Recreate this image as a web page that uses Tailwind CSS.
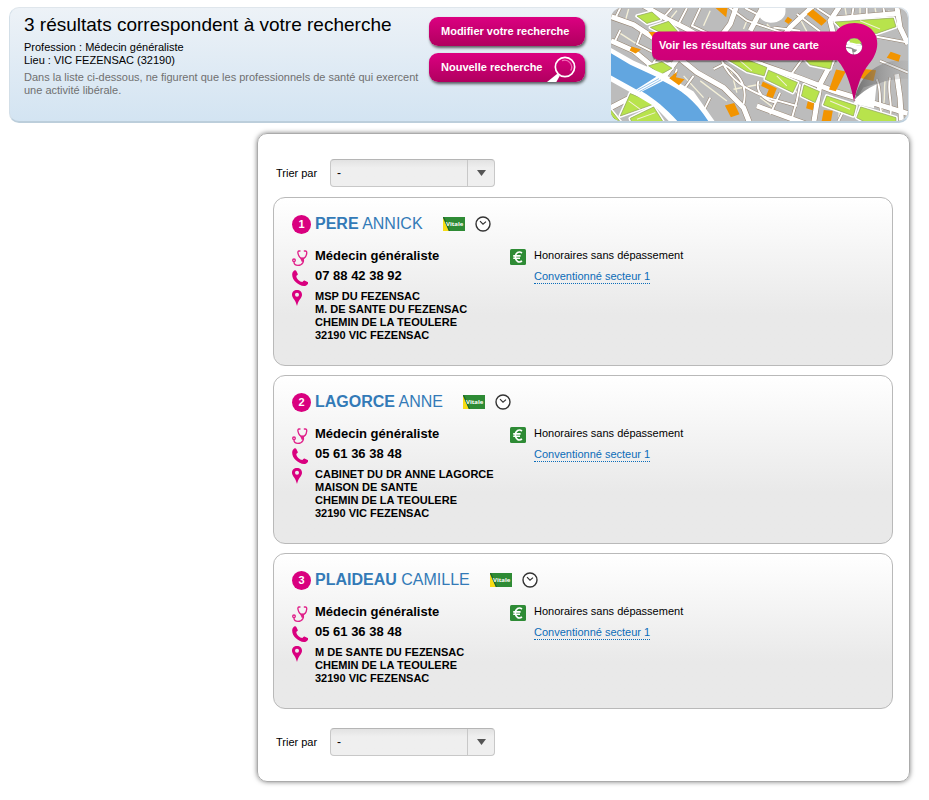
<!DOCTYPE html>
<html lang="fr">
<head>
<meta charset="utf-8">
<meta name="viewport" content="width=device-width, initial-scale=1">
<title>Résultats de recherche</title>
<script src="https://cdn.jsdelivr.net/npm/@tailwindcss/browser@4"></script>
</head>
<body class="bg-white font-['Liberation_Sans',Arial,sans-serif] text-[11px] text-black">

<svg class="hidden" aria-hidden="true">
  <symbol id="stethoscope" viewBox="0 0 48 48">
    <g fill="none" stroke="#e0218a" stroke-width="4" stroke-linecap="round">
      <path d="M24 3h-3c-3 0-4 3-3 7 2 9 6 15 13 15s12-6 13-15c1-4-1-7-4-7h-3"/>
      <path d="M31 25c8 8 0 21-13 21-7 0-12-4-12-10"/>
      <circle cx="6" cy="31" r="4"/>
    </g>
    <path d="M24 23h14l-5 12h-4z" fill="#e0218a"/>
  </symbol>
  <symbol id="phone" viewBox="0 0 48 48">
    <path d="M8 1c2-1 4 0 5 2l4 8c1 2 0 4-2 5l-2 2c0 4 2 8 6 12s8 6 12 6l3-3c1-2 3-2 5-1l8 4c2 1 2 3 1 5-3 5-7 7-12 7-9 0-18-5-25-12C4 29-1 19 1 10 2 6 5 2 8 1z" fill="#d9007f"/>
  </symbol>
  <symbol id="pin" viewBox="0 0 30 48">
    <path fill-rule="evenodd" d="M15 0C6 0 0 6 0 14c0 10 11 15 15 34 4-19 15-24 15-34C30 6 24 0 15 0zm0 8a6 6 0 1 1 0 12 6 6 0 0 1 0-12z" fill="#d9007f"/>
  </symbol>
  <symbol id="clock" viewBox="0 0 16 16">
    <circle cx="8" cy="8" r="7" fill="#fff" stroke="#333" stroke-width="1.4"/>
    <path d="M5 5.200l3 3 3-2.600" fill="none" stroke="#333" stroke-width="1.200"/>
  </symbol>
  <symbol id="vitale" viewBox="0 0 22 14">
    <path d="M0 0h22v14H0z" fill="#2e8b35"/>
    <path d="M0 1l6 13H0z" fill="#f7dc16"/>
    <path d="M0 0h1l6 14H5.800z" fill="#1f5f2a"/>
    <text x="3" y="9" font-size="6" font-weight="700" fill="#fff" font-family="Open Sans, sans-serif">Vitale</text>
  </symbol>
  <symbol id="euro" viewBox="0 0 16 16">
    <rect width="16" height="16" rx="1.500" fill="#2e8b35"/>
    <path d="M12 4C9 1.800 5.400 3.600 5.400 8s3.600 6.200 6.600 4M3.200 6.900h7.400M3.200 9.200h6.800" fill="none" stroke="#fff" stroke-width="1.600"/>
  </symbol>
</svg>

<header class="mt-[7px] mr-5 ml-[9px] flex rounded-[10px] border border-b-2 border-x-[#d3dfe8] border-t-[#dfe6ec] border-b-[#bccedb] bg-linear-to-b from-[#edf2f7] to-[#d3e4f2]">
  <div class="min-w-0 flex-1 pt-[3px] pl-[14px]">
    <h1 class="mb-[2px] text-[19px] leading-7">3 résultats correspondent à votre recherche</h1>
    <p class="leading-[13px]">Profession : Médecin généraliste</p>
    <p class="leading-[13px]">Lieu : VIC FEZENSAC (32190)</p>
    <p class="mt-1 leading-[13px] text-[#707070]">Dans la liste ci-dessous, ne figurent que les professionnels de santé qui exercent une activité libérale.</p>
  </div>
  <div class="flex w-[156px] shrink-0 flex-col gap-[7px] pt-[9px]">
    <button type="button" class="h-[29px] rounded-[9px] bg-linear-to-b from-[#dc0081] to-[#b0005f] pl-3 text-left text-[11px] font-bold text-white shadow-[1px_2px_3px_rgba(0,0,0,0.6)]">Modifier votre recherche</button>
    <button type="button" class="flex h-[29px] rounded-[9px] bg-linear-to-b from-[#dc0081] to-[#b0005f] pl-3 text-left text-[11px] leading-[28px] font-bold text-white shadow-[1px_2px_3px_rgba(0,0,0,0.6)]">Nouvelle recherche
      <svg class="mt-[3px] mr-[9px] ml-auto h-[26px] w-[29px]" viewBox="0 0 87 78" aria-hidden="true">
        <circle cx="54" cy="33" r="29" fill="none" stroke="#fff" stroke-width="5"/>
        <path d="M45 14a21 21 0 0 1 26 30" fill="none" stroke="#f06bb5" stroke-width="4"/>
        <path d="M31 53l7 7-10 18H0z" fill="#fff"/>
      </svg>
    </button>
  </div>
  <a href="#carte" class="relative ml-[26px] block h-[113px] w-[297px] shrink-0 overflow-hidden rounded-[10px]">
    <svg class="size-full" viewBox="32 22 892 338" preserveAspectRatio="none" aria-hidden="true">
      <defs>
        <linearGradient id="pink" x1="0" y1="0" x2="0" y2="1"><stop offset="0" stop-color="#dc0081"/><stop offset="1" stop-color="#bd006c"/></linearGradient>
        <linearGradient id="cast" x1="0" y1="0" x2="1" y2="0"><stop offset="0" stop-color="#555" stop-opacity=".75"/><stop offset="1" stop-color="#999" stop-opacity=".15"/></linearGradient>
        <g id="avenues" fill="none">
          <path d="M32 48 100 72 170 118 290 215 370 260 430 320 450 370"/>
          <path d="M130 15 200 55 260 85 380 155 600 232 700 270 924 338"/>
          <path d="M410 15 390 70 360 110"/>
          <path d="M490 15 450 90"/>
          <path d="M640 15 570 80 540 120"/>
          <path d="M720 15 690 60 700 100"/>
          <path d="M690 56 900 38"/>
          <path d="M890 15 900 80 924 130"/>
          <path d="M32 120 100 150 160 200 215 190"/>
          <path d="M250 150 190 230 100 285 32 320"/>
          <path d="M700 175 660 250 640 370"/>
          <path d="M890 220 900 290 905 370"/>
          <path d="M470 315 620 370"/>
        </g>
        <g id="lanes" fill="none">
          <path d="M60 22 46 50M215 22 190 50M260 22 235 70M300 22 275 75 350 110M60 88 42 125M125 90 110 130 170 160M180 150 155 195M380 15 440 60 560 100"/>
          <path d="M230 205 215 250M280 225 240 280M340 205 370 190C430 225 440 270 430 310M365 180C390 240 440 265 500 290L590 315M475 240C465 270 490 300 530 305M540 275 510 340"/>
          <path d="M330 290 300 350M610 170 570 225M600 250 590 300 570 370M730 330 715 360"/>
          <path d="M830 235C850 280 830 320 850 350M870 230C860 280 880 300 870 350"/>
          <path d="M435 22 480 45M520 80 600 90M590 40 660 92M650 22 690 48M760 22 755 52M800 22 800 50M850 22 855 45M830 108 924 125M840 180 924 215"/>
        </g>
      </defs>
      <path d="M0 0h960v400H0z" fill="#bcbcbc"/>
      <g fill="none" stroke="#f4f0d8" stroke-width="4">
        <path d="M85 25 75 60M230 30 205 60M55 95 110 130M330 30 310 75M250 225 310 290M300 240 380 300M390 200 410 275M400 265 480 250M520 235 560 250 610 290M440 60 430 85M500 70 520 92M600 55 620 92M735 22 740 52M780 22 780 50M825 22 830 48M855 240C850 280 860 300 840 345M720 310 715 360M530 330 580 350M865 30 885 45M480 290 520 320"/>
      </g>
      <g stroke="#94826f" stroke-width="9"><use href="#lanes"/></g>
      <g stroke="#94826f" stroke-width="18"><use href="#avenues"/></g>
      <g stroke="#fff" stroke-width="6"><use href="#lanes"/></g>
      <g stroke="#fff" stroke-width="15"><use href="#avenues"/></g>
      <path d="M478 15h78v18c0 18-20 34-46 33-18-1-32-11-32-22zM790 260l40-12-8 74-62-14z" fill="#fff"/>
      <g stroke="#fff" stroke-width="11" stroke-linejoin="round">
        <g id="parks">
          <path d="M110 46 155 34 180 56 140 68z"/>
          <path d="M150 80 205 62 232 92 182 96z"/>
          <path d="M145 195 185 183 215 202 182 220z"/>
          <path d="M90 278 165 308 60 345z"/>
          <path d="M90 352 160 318 190 365H95z"/>
          <path d="M30 325 62 365H30z"/>
          <path d="M375 172H430L500 200 492 225 440 212z"/>
          <path d="M505 208 592 245 578 275 495 235z"/>
          <path d="M612 252 658 272 645 305 604 285z"/>
          <path d="M680 285 768 314 760 345 670 312z"/>
          <path d="M782 318 888 350 888 370 800 366 770 350z"/>
          <path d="M705 64 880 52 888 78 830 98 730 90z"/>
          <path d="M610 170H700L690 204 630 192z"/>
        </g>
      </g>
      <g fill="#b8e34c" stroke="#94a06f" stroke-width="2"><use href="#parks" stroke="none"/>
        <path d="M110 46 155 34 180 56 140 68zM150 80 205 62 232 92 182 96zM145 195 185 183 215 202 182 220zM90 278 165 308 60 345zM90 352 160 318 190 365H95zM30 325 62 365H30z"/>
        <path d="M375 172H430L500 200 492 225 440 212zM505 208 592 245 578 275 495 235zM612 252 658 272 645 305 604 285zM680 285 768 314 760 345 670 312zM782 318 888 350 888 370 800 366 770 350z"/>
        <path d="M705 64 880 52 888 78 830 98 730 90zM610 170H700L690 204 630 192z"/>
      </g>
      <path d="M780 60 840 85M85 300 120 325M420 180 455 210M530 225 560 255M690 300 750 325M110 355 165 335" fill="none" stroke="#f4f0d8" stroke-width="3"/>
      <path d="M20 135 100 180 195 222 280 272 350 370H215L165 318 110 285 20 235z" fill="#fff"/>
      <path d="M32 157 90 192 168 228 108 266 32 224z" fill="#62a6e0"/>
      <path d="M188 240C240 265 290 300 330 370H240C205 330 165 295 125 272z" fill="#62a6e0"/>
      <path d="M112 268 176 233M118 272 182 237" stroke="#62a6e0" stroke-width="2"/>
      <g fill="#f29400">
        <path d="M346 22h36l-4 28z"/><path d="M563 48l14 10-12 12-12-8z"/><path d="M620 40l18-14 42 34-16 15z"/>
        <path d="M145 94h22l-6 20z"/><path d="M94 137l28 9-16 12-18-9z"/><path d="M207 232l23-19-3 16 26 6-17 18z"/>
        <path d="M488 242l42 20-12 30-20-8 8-18-23-11z"/><path d="M374 314l28-8 16 34-26 9z"/>
        <path d="M623 301l19 6-4 21-20-6z"/><path d="M671 327l27 2-6 35h-28z"/>
        <path d="M708 206l29 6-30 59-20-5z"/><path d="M872 153l30 10-6 20-36-12z"/><path d="M770 202l58 6-8 32-36-8z"/>
      </g>
      <path d="M764 296C775 230 830 170 924 180V234C850 232 800 260 764 296z" fill="url(#cast)"/>
      <path d="M178 97H712V184H178a22 22 0 0 1-22-22z" fill="#000" opacity=".35"/>
      <circle cx="762" cy="137" r="27" fill="#8d8d8d"/>
      <path d="M738 133c14-9 34 4 48 2a25 25 0 0 1-22 27l-5-6c6-2 12-6 12-9-12-2-18-11-33-8z" fill="#fff"/>
      <path d="M737 141l18 4 4 16c-12-1-20-8-22-20zM740 124c10-8 30-6 46 10-14 4-26-6-46-2z" fill="#fff"/>
      <path d="M749 117c14-8 30-3 36 10-14 6-24-3-36-2z" fill="#b8e34c"/>
      <path fill-rule="evenodd" d="M177 92H708C728 60 800 54 825 100 840 130 828 165 806 190 785 215 770 260 762 302 754 260 740 208 712 178H177a22 22 0 0 1-22-22V114a22 22 0 0 1 22-22zM762 112a25 25 0 1 0 0 50 25 25 0 0 0 0-50z" fill="url(#pink)"/>
    </svg>
    <span class="absolute top-[29px] left-12 leading-4 font-bold whitespace-nowrap text-white">Voir les résultats sur une carte</span>
  </a>
</header>

<main class="mt-[10px] mr-[19px] mb-4 ml-[257px] rounded-[10px] border border-[#ababab] py-[25px] pr-4 pl-[15px] shadow-[0_0_5px_rgba(0,0,0,0.5)]">
  <div class="flex items-center pl-[3px]">
    <label for="tri-haut" class="w-[54px]">Trier par</label>
    <div class="relative h-7 w-[165px]">
      <select id="tri-haut" class="size-full appearance-none rounded-[4px] border border-[#c8c8c8] border-t-[#b5b5b5] bg-linear-to-b from-[#e2e2e2] to-[#efefef] to-30% pl-[6px] text-xs"><option>-</option></select>
      <span class="pointer-events-none absolute inset-y-px right-px flex w-[27px] items-center justify-center border-l border-[#c8c8c8]">
        <svg class="h-[6px] w-[9px]" viewBox="0 0 9 6" aria-hidden="true"><path d="M0 0h9L4.500 6z" fill="#555"/></svg>
      </span>
    </div>
  </div>

  <ol class="mt-[10px] flex flex-col gap-[9px]">
    <li class="rounded-[12px] border border-[#b9b9b9] bg-linear-to-b from-white to-[#e9e9e9] to-70% px-[18px] pt-4 pb-[23px]">
      <div class="flex h-5 items-center">
        <span class="mr-1 flex size-[19px] items-center justify-center rounded-full bg-[#d9007f] font-bold text-white">1</span>
        <h2 class="text-base leading-5 text-[#337ab7]"><a href="#pere"><strong>PERE</strong> ANNICK</a></h2>
        <svg class="ml-5 h-[14px] w-[22px]" role="img" aria-label="Carte Vitale"><use href="#vitale"/></svg>
        <svg class="ml-[10px] size-4" role="img" aria-label="Horaires"><use href="#clock"/></svg>
      </div>
      <div class="mt-3 grid grid-cols-[218px_1fr]">
        <div>
          <p class="flex h-5 items-center text-[13px] font-bold"><svg class="mt-1 mr-[7px] size-4" aria-hidden="true"><use href="#stethoscope"/></svg>Médecin généraliste</p>
          <p class="flex h-5 items-center text-[13px] font-bold"><svg class="mt-1 mr-[7px] size-4" aria-hidden="true"><use href="#phone"/></svg>07 88 42 38 92</p>
          <div class="mt-1 flex leading-[13px] font-bold whitespace-nowrap"><svg class="mr-[13px] h-4 w-[10px] shrink-0" aria-hidden="true"><use href="#pin"/></svg>
            <address class="not-italic">MSP DU FEZENSAC<br>M. DE SANTE DU FEZENSAC<br>CHEMIN DE LA TEOULERE<br>32190 VIC FEZENSAC</address></div>
        </div>
        <div class="flex items-start">
          <svg class="mt-[3px] mr-2 size-4 shrink-0" aria-hidden="true"><use href="#euro"/></svg>
          <div><p class="mb-1 leading-[18px]">Honoraires sans dépassement</p><a href="#secteur" class="inline-block border-b border-dotted border-[#0b6cb8] leading-[14px] text-[#0b6cb8]">Conventionné secteur 1</a></div>
        </div>
      </div>
    </li>

    <li class="rounded-[12px] border border-[#b9b9b9] bg-linear-to-b from-white to-[#e9e9e9] to-70% px-[18px] pt-4 pb-[23px]">
      <div class="flex h-5 items-center">
        <span class="mr-1 flex size-[19px] items-center justify-center rounded-full bg-[#d9007f] font-bold text-white">2</span>
        <h2 class="text-base leading-5 text-[#337ab7]"><a href="#lagorce"><strong>LAGORCE</strong> ANNE</a></h2>
        <svg class="ml-5 h-[14px] w-[22px]" role="img" aria-label="Carte Vitale"><use href="#vitale"/></svg>
        <svg class="ml-[10px] size-4" role="img" aria-label="Horaires"><use href="#clock"/></svg>
      </div>
      <div class="mt-3 grid grid-cols-[218px_1fr]">
        <div>
          <p class="flex h-5 items-center text-[13px] font-bold"><svg class="mt-1 mr-[7px] size-4" aria-hidden="true"><use href="#stethoscope"/></svg>Médecin généraliste</p>
          <p class="flex h-5 items-center text-[13px] font-bold"><svg class="mt-1 mr-[7px] size-4" aria-hidden="true"><use href="#phone"/></svg>05 61 36 38 48</p>
          <div class="mt-1 flex leading-[13px] font-bold whitespace-nowrap"><svg class="mr-[13px] h-4 w-[10px] shrink-0" aria-hidden="true"><use href="#pin"/></svg>
            <address class="not-italic">CABINET DU DR ANNE LAGORCE<br>MAISON DE SANTE<br>CHEMIN DE LA TEOULERE<br>32190 VIC FEZENSAC</address></div>
        </div>
        <div class="flex items-start">
          <svg class="mt-[3px] mr-2 size-4 shrink-0" aria-hidden="true"><use href="#euro"/></svg>
          <div><p class="mb-1 leading-[18px]">Honoraires sans dépassement</p><a href="#secteur" class="inline-block border-b border-dotted border-[#0b6cb8] leading-[14px] text-[#0b6cb8]">Conventionné secteur 1</a></div>
        </div>
      </div>
    </li>

    <li class="rounded-[12px] border border-[#b9b9b9] bg-linear-to-b from-white to-[#e9e9e9] to-70% px-[18px] pt-4 pb-[23px]">
      <div class="flex h-5 items-center">
        <span class="mr-1 flex size-[19px] items-center justify-center rounded-full bg-[#d9007f] font-bold text-white">3</span>
        <h2 class="text-base leading-5 text-[#337ab7]"><a href="#plaideau"><strong>PLAIDEAU</strong> CAMILLE</a></h2>
        <svg class="ml-5 h-[14px] w-[22px]" role="img" aria-label="Carte Vitale"><use href="#vitale"/></svg>
        <svg class="ml-[10px] size-4" role="img" aria-label="Horaires"><use href="#clock"/></svg>
      </div>
      <div class="mt-3 grid grid-cols-[218px_1fr]">
        <div>
          <p class="flex h-5 items-center text-[13px] font-bold"><svg class="mt-1 mr-[7px] size-4" aria-hidden="true"><use href="#stethoscope"/></svg>Médecin généraliste</p>
          <p class="flex h-5 items-center text-[13px] font-bold"><svg class="mt-1 mr-[7px] size-4" aria-hidden="true"><use href="#phone"/></svg>05 61 36 38 48</p>
          <div class="mt-1 flex leading-[13px] font-bold whitespace-nowrap"><svg class="mr-[13px] h-4 w-[10px] shrink-0" aria-hidden="true"><use href="#pin"/></svg>
            <address class="not-italic">M DE SANTE DU FEZENSAC<br>CHEMIN DE LA TEOULERE<br>32190 VIC FEZENSAC</address></div>
        </div>
        <div class="flex items-start">
          <svg class="mt-[3px] mr-2 size-4 shrink-0" aria-hidden="true"><use href="#euro"/></svg>
          <div><p class="mb-1 leading-[18px]">Honoraires sans dépassement</p><a href="#secteur" class="inline-block border-b border-dotted border-[#0b6cb8] leading-[14px] text-[#0b6cb8]">Conventionné secteur 1</a></div>
        </div>
      </div>
    </li>
  </ol>

  <div class="mt-[19px] flex items-center pl-[3px]">
    <label for="tri-bas" class="w-[54px]">Trier par</label>
    <div class="relative h-7 w-[165px]">
      <select id="tri-bas" class="size-full appearance-none rounded-[4px] border border-[#c8c8c8] border-t-[#b5b5b5] bg-linear-to-b from-[#e2e2e2] to-[#efefef] to-30% pl-[6px] text-xs"><option>-</option></select>
      <span class="pointer-events-none absolute inset-y-px right-px flex w-[27px] items-center justify-center border-l border-[#c8c8c8]">
        <svg class="h-[6px] w-[9px]" viewBox="0 0 9 6" aria-hidden="true"><path d="M0 0h9L4.500 6z" fill="#555"/></svg>
      </span>
    </div>
  </div>
</main>
</body>
</html>
